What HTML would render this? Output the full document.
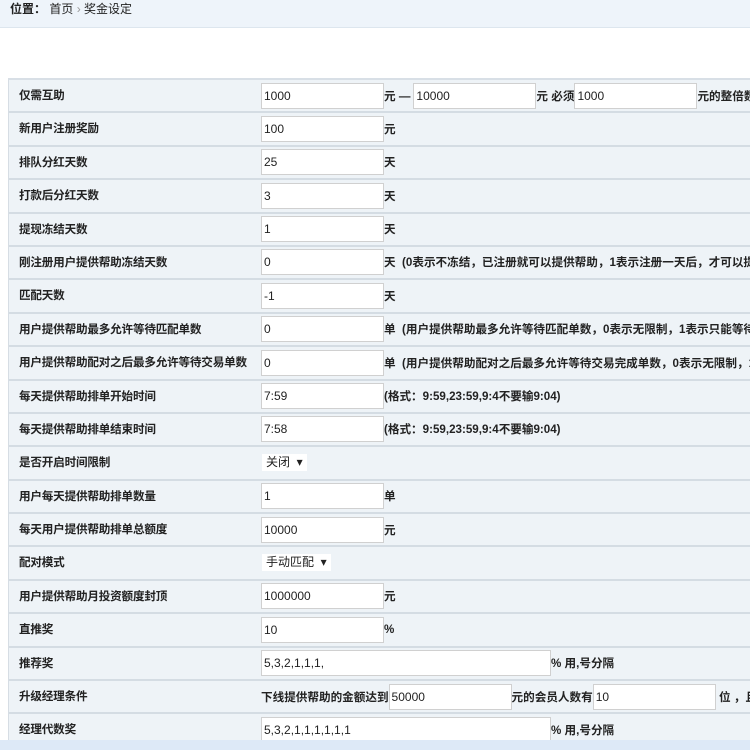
<!DOCTYPE html>
<html><head><meta charset="utf-8"><style>
*{margin:0;padding:0;box-sizing:border-box}
html,body{width:750px;height:750px;overflow:hidden}
body{background:#fff;font-family:"Liberation Sans","Noto Sans CJK SC",sans-serif;font-size:12px;color:#222;position:relative}
.crumb{position:absolute;left:0;top:0;width:750px;height:28px;background:#eef4fa;border-bottom:1px solid #dde6ee;padding:0 0 0 10px;line-height:18px;font-size:12px}
.crumb b{font-weight:bold}
.tbl{position:absolute;left:8px;top:78px;width:742px;overflow:hidden;border-left:1px solid #d6dde4;border-top:2px solid #d8dfe6}
.row{height:33.4px;background:#eef3f7;border-bottom:2px solid #d4dce3;position:relative;font-weight:bold;font-size:11.6px}
.lab{position:absolute;left:10px;top:0;line-height:31px;letter-spacing:-0.2px}
.val{position:absolute;left:252px;top:0;height:31px;display:flex;align-items:center;white-space:nowrap}
.in{display:inline-block;width:123px;height:26px;background:#fff;border:1px solid #d0d0d0;font-weight:normal;line-height:24px;padding-left:2px;color:#222;font-size:12px}
.w{width:290px}
.sel{display:inline-block;background:#fff;height:17px;line-height:17px;padding:0 4px;font-weight:normal;margin-left:1px;font-size:12px}
.bot{position:absolute;left:0;top:740px;width:750px;height:10px;background:#dde9f7}
</style></head><body>
<div class="crumb"><b>位置：</b> 首页 <span style="color:#999">›</span> 奖金设定</div>
<div class="tbl">
<div class="row"><span class="lab">仅需互助</span><span class="val"><span class="in">1000</span>元 — <span class="in" style="margin-left:3px">10000</span>元 必须<span class="in">1000</span>元的整倍数</span></div>
<div class="row"><span class="lab">新用户注册奖励</span><span class="val"><span class="in">100</span>元</span></div>
<div class="row"><span class="lab">排队分红天数</span><span class="val"><span class="in">25</span>天</span></div>
<div class="row"><span class="lab">打款后分红天数</span><span class="val"><span class="in">3</span>天</span></div>
<div class="row"><span class="lab">提现冻结天数</span><span class="val"><span class="in">1</span>天</span></div>
<div class="row"><span class="lab">刚注册用户提供帮助冻结天数</span><span class="val"><span class="in">0</span>天 &nbsp;(0表示不冻结，已注册就可以提供帮助，1表示注册一天后，才可以提供帮助)</span></div>
<div class="row"><span class="lab">匹配天数</span><span class="val"><span class="in">-1</span>天</span></div>
<div class="row"><span class="lab">用户提供帮助最多允许等待匹配单数</span><span class="val"><span class="in">0</span>单 &nbsp;(用户提供帮助最多允许等待匹配单数，0表示无限制，1表示只能等待一单)</span></div>
<div class="row"><span class="lab">用户提供帮助配对之后最多允许等待交易单数</span><span class="val"><span class="in">0</span>单 &nbsp;(用户提供帮助配对之后最多允许等待交易完成单数，0表示无限制，1)</span></div>
<div class="row"><span class="lab">每天提供帮助排单开始时间</span><span class="val"><span class="in">7:59</span>(格式：9:59,23:59,9:4不要输9:04)</span></div>
<div class="row"><span class="lab">每天提供帮助排单结束时间</span><span class="val"><span class="in">7:58</span>(格式：9:59,23:59,9:4不要输9:04)</span></div>
<div class="row"><span class="lab">是否开启时间限制</span><span class="val"><span class="sel">关闭 &nbsp;▾</span></span></div>
<div class="row"><span class="lab">用户每天提供帮助排单数量</span><span class="val"><span class="in">1</span>单</span></div>
<div class="row"><span class="lab">每天用户提供帮助排单总额度</span><span class="val"><span class="in">10000</span>元</span></div>
<div class="row"><span class="lab">配对模式</span><span class="val"><span class="sel">手动匹配 &nbsp;▾</span></span></div>
<div class="row"><span class="lab">用户提供帮助月投资额度封顶</span><span class="val"><span class="in">1000000</span>元</span></div>
<div class="row"><span class="lab">直推奖</span><span class="val"><span class="in">10</span>%</span></div>
<div class="row"><span class="lab">推荐奖</span><span class="val"><span class="in w">5,3,2,1,1,1,</span>% 用,号分隔</span></div>
<div class="row"><span class="lab">升级经理条件</span><span class="val">下线提供帮助的金额达到<span class="in">50000</span>元的会员人数有<span class="in">10</span>&nbsp;位 ，且</span></div>
<div class="row"><span class="lab">经理代数奖</span><span class="val"><span class="in w">5,3,2,1,1,1,1,1,1</span>% 用,号分隔</span></div>
</div>
<div class="bot"></div>
</body></html>
